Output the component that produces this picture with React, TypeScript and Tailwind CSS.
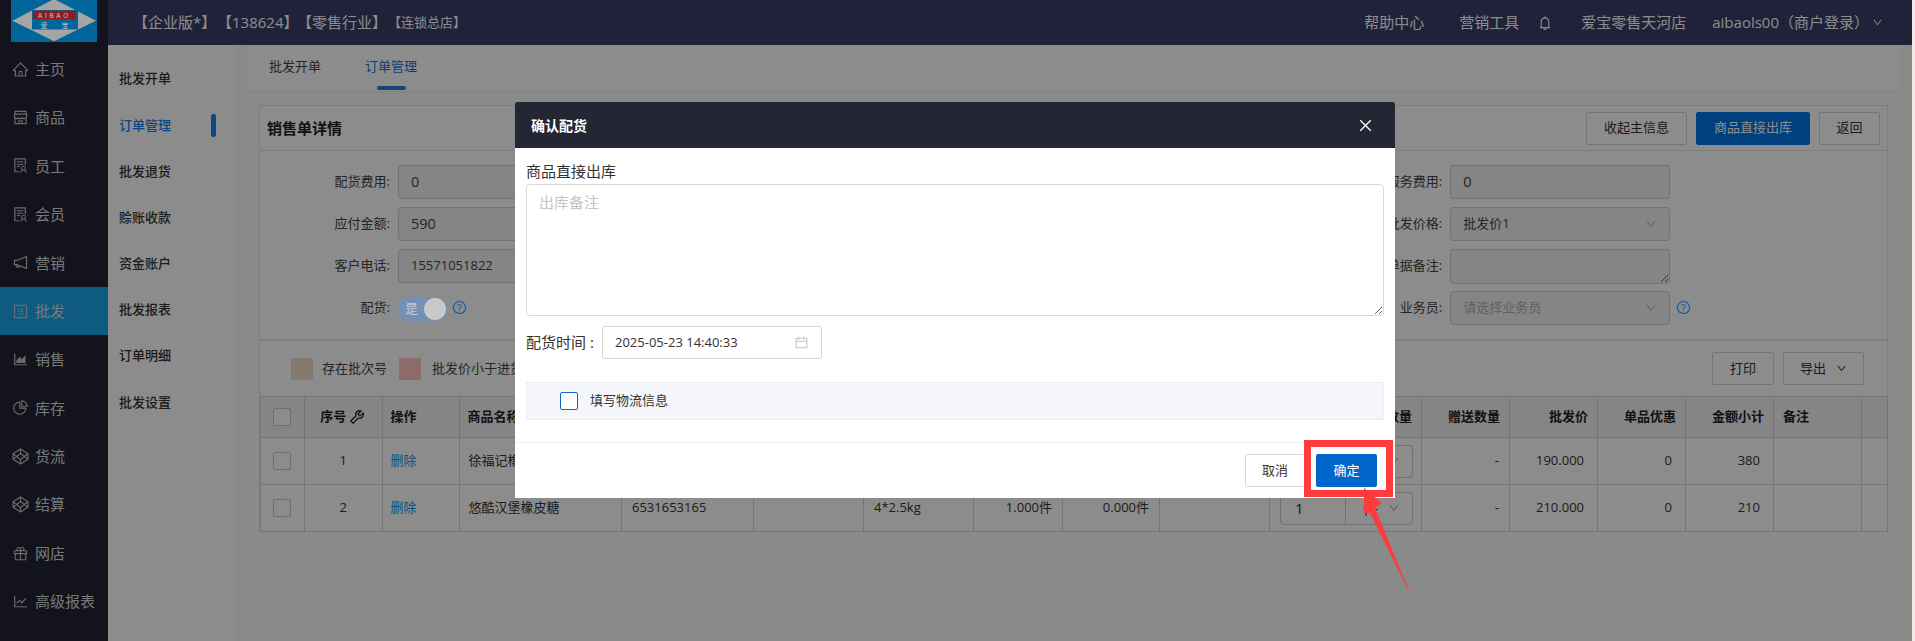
import {
  AiOutlineAreaChart,
  AiOutlineBell,
  AiOutlineCalendar,
  AiOutlineClose,
  AiOutlineDown,
  AiOutlineGift,
  AiOutlineHome,
  AiOutlineLineChart,
  AiOutlineNotification,
  AiOutlinePieChart,
  AiOutlineProfile,
  AiOutlineQuestionCircle,
  AiOutlineShop,
  AiOutlineSolution,
  AiOutlineTool,
} from "react-icons/ai";

const CubeIcon = ({ className = "" }: { className?: string }) => (
  <svg viewBox="0 0 16 16" fill="none" stroke="currentColor" strokeWidth="1.1" className={className}>
    <polygon points="8,1 15,5.5 15,10.5 8,15 1,10.5 1,5.5" strokeLinejoin="round" />
    <polygon points="8,5 11.5,8 8,11 4.5,8" />
    <path d="M8 1v4M8 11v4M1 5.5 4.5 8M15 5.5 11.5 8M1 10.5 4.5 8M15 10.5 11.5 8" />
  </svg>
);

const menu = [
  { label: "主页", icon: AiOutlineHome },
  { label: "商品", icon: AiOutlineShop },
  { label: "员工", icon: AiOutlineSolution },
  { label: "会员", icon: AiOutlineSolution },
  { label: "营销", icon: AiOutlineNotification },
  { label: "批发", icon: AiOutlineProfile, active: true },
  { label: "销售", icon: AiOutlineAreaChart },
  { label: "库存", icon: AiOutlinePieChart },
  { label: "货流", icon: CubeIcon },
  { label: "结算", icon: CubeIcon },
  { label: "网店", icon: AiOutlineGift },
  { label: "高级报表", icon: AiOutlineLineChart },
];

const subMenu = ["批发开单", "订单管理", "批发退货", "赊账收款", "资金账户", "批发报表", "订单明细", "批发设置"];

const Logo = () => (
  <svg viewBox="0 0 86 42" className="relative z-20 ml-[11px] block h-[42px] w-[86px]">
    <rect width="86" height="42" fill="#03669a" />
    <polygon points="1.5,20.7 43,-1 85,20.7 43,41.3" fill="#a5a5a5" />
    <rect x="21" y="10" width="46" height="19.5" fill="#03669a" />
    <rect x="22" y="10.7" width="43" height="8.6" fill="#8e1d20" />
    <text x="43.5" y="17.5" textAnchor="middle" fontSize="6.5" letterSpacing="2.6" fill="#c9c9c9" fontFamily="'Liberation Sans', sans-serif">
      AIBAO
    </text>
    <text x="33" y="27.5" textAnchor="middle" fontSize="7" fill="#a9b9c2" fontFamily="'Noto Sans CJK SC', sans-serif">
      爱
    </text>
    <text x="54" y="27.5" textAnchor="middle" fontSize="7" fill="#a9b9c2" fontFamily="'Noto Sans CJK SC', sans-serif">
      宝
    </text>
  </svg>
);

const Sidebar = () => (
  <aside className="flex w-[108px] shrink-0 flex-col bg-[#212433]">
    <div className="h-[45px]">
      <Logo />
    </div>
    {menu.map((item) => {
      const Icon = item.icon;
      return (
        <div
          key={item.label}
          className={`flex h-[48.4px] items-center pl-[12px] text-[15px] text-[#dcdcdc] ${item.active ? "bg-[#1ca6e8]" : ""}`}
        >
          <Icon className="mr-[6px] size-[17px] text-[#c4c4c4]" />
          {item.label}
        </div>
      );
    })}
  </aside>
);

const TopBar = () => (
  <header className="flex h-[45px] shrink-0 items-center bg-[#3a3e69] pl-[25px] pr-[29px] text-[15px] text-white">
    <span className="w-[84px]">【企业版*】</span>
    <span className="w-[80px]">【138624】</span>
    <span className="w-[91px]">【零售行业】</span>
    <span className="text-[13px]">【连锁总店】</span>
    <span className="ml-auto">帮助中心</span>
    <span className="ml-[35px]">营销工具</span>
    <AiOutlineBell className="ml-[18px] size-[16px]" />
    <span className="ml-[28px]">爱宝零售天河店</span>
    <span className="ml-[26px]">aibaols00（商户登录）</span>
    <AiOutlineDown className="ml-[3px] size-[11px]" />
  </header>
);

const SubNav = () => (
  <nav className="flex w-[128px] shrink-0 flex-col bg-white pt-[11px] text-[13px] font-medium text-[#333333]">
    {subMenu.map((label) => {
      const active = label === "订单管理";
      return (
        <div key={label} className={`flex h-[46.2px] items-center justify-between pl-[11px] pr-[20px] ${active ? "text-[#0e80ee]" : ""}`}>
          {label}
          {active && <span className="h-[23px] w-[5px] rounded-[2px] bg-[#0e84f6]" />}
        </div>
      );
    })}
  </nav>
);

const Tabs = () => (
  <div className="flex h-[45px] shrink-0 bg-white pl-[22px] text-[13px] text-[#444444] shadow-[0_1px_3px_rgba(0,0,0,0.06)]">
    <div className="flex h-full w-[96px] items-center pb-[3px]">批发开单</div>
    <div className="relative flex h-full items-center pb-[3px] text-[#1274dc]">
      订单管理
      <span className="absolute bottom-[1px] left-[12px] h-[4px] w-[29px] rounded-[2px] bg-[#2a7cdc]" />
    </div>
  </div>
);

const Btn = ({ children, className = "" }: { children: React.ReactNode; className?: string }) => (
  <div className={`flex h-[33px] items-center justify-center rounded-[2px] border border-[#d4d4d4] bg-white text-[13px] text-[#333333] ${className}`}>
    {children}
  </div>
);

const Field = ({ label, className = "", children }: { label: string; className?: string; children: React.ReactNode }) => (
  <div className={`flex h-[42px] items-start ${className}`}>
    <span className="flex h-[33px] w-[129px] shrink-0 items-center justify-end pr-[8px] text-[13px] text-[#444444]">{label}:</span>
    {children}
  </div>
);

const inputBox = "flex h-[34px] w-[220px] shrink-0 items-center rounded-[4px] border border-[#cfcfcf] bg-[#f2f2f2] px-[12px] text-[#444444]";

const Question = ({ className = "" }: { className?: string }) => (
  <AiOutlineQuestionCircle className={`relative z-20 size-[15px] shrink-0 text-[#0d5ca8] ${className}`} />
);

const DetailForm = () => (
  <div className="grid h-[188px] w-[1412px] auto-rows-[42px] grid-cols-4 content-start pl-[9px] pt-[14px]">
    <Field label="配货费用" className="col-start-1 row-start-1">
      <div className={`${inputBox} text-[14.5px]`}>0</div>
    </Field>
    <Field label="服务费用" className="col-start-4 row-start-1">
      <div className={`${inputBox} text-[14.5px]`}>0</div>
    </Field>
    <Field label="应付金额" className="col-start-1 row-start-2">
      <div className={`${inputBox} text-[14.5px]`}>590</div>
    </Field>
    <Field label="批发价格" className="col-start-4 row-start-2">
      <div className={`${inputBox} justify-between text-[13px]`}>
        批发价1
        <AiOutlineDown className="size-[12px] text-[#b5b5b5]" />
      </div>
    </Field>
    <Field label="客户电话" className="col-start-1 row-start-3">
      <div className={`${inputBox} text-[13px]`}>15571051822</div>
    </Field>
    <Field label="单据备注" className="col-start-4 row-start-3">
      <textarea readOnly className="h-[35px] w-[220px] shrink-0 rounded-[4px] border border-[#cfcfcf] bg-[#f2f2f2]" />
    </Field>
    <Field label="配货" className="col-start-1 row-start-4">
      <div className="mt-[6px] flex items-start">
        <div className="relative z-20 flex h-[24px] w-[49px] items-center justify-between rounded-full bg-[#7291b5] pl-[7px] pr-[1px] text-[13px] text-[#c2cddc]">
          是
          <span className="size-[22px] rounded-full bg-[#c9c9c9]" />
        </div>
        <Question className="ml-[5px] mt-[3px]" />
      </div>
    </Field>
    <Field label="业务员" className="col-start-4 row-start-4">
      <div className="flex items-center">
        <div className={`${inputBox} justify-between text-[13px] text-[#b0b0b0]`}>
          请选择业务员
          <AiOutlineDown className="size-[12px] text-[#b5b5b5]" />
        </div>
        <Question className="ml-[6px] -mt-[2px]" />
      </div>
    </Field>
  </div>
);

const colWidths = [
  "w-[44px]", "w-[77.5px]", "w-[77px]", "w-[162.5px]", "w-[132px]", "w-[110px]", "w-[110px]", "w-[89px]", "w-[97px]",
  "w-[110px]", "w-[152px]", "w-[88px]", "w-[88px]", "w-[88px]", "w-[88px]", "w-[88px]", "w-[26px]",
];

const th = "border border-[#d6d6d6] px-[9px] font-semibold";
const td = "border border-[#d6d6d6] px-[10px] font-normal";

const Box = () => <div className="ml-[3px] size-[18px] rounded-[2px] border border-[#c8c8c8] bg-white" />;

const QtyCell = () => (
  <td className={`${td} !px-[10px]`}>
    <div className="flex h-[33px] w-[133px] text-[15px]">
      <div className="flex w-[66px] items-center rounded-l-[4px] border border-[#cfcfcf] pl-[14px]">1</div>
      <div className="flex w-[67px] items-center justify-between rounded-r-[4px] border border-l-0 border-[#cfcfcf] pl-[17px] pr-[12px]">
        件
        <AiOutlineDown className="size-[12px] text-[#a8a8a8]" />
      </div>
    </div>
  </td>
);

const rows = [
  { name: "徐福记橡皮糖", code: "6931653165", spec: "4*2.5kg", qty: "2.000件", price: "190.000", total: "380" },
  { name: "悠酷汉堡橡皮糖", code: "6531653165", spec: "4*2.5kg", qty: "1.000件", price: "210.000", total: "210" },
];

const GoodsTable = () => (
  <table className="w-[1627px] table-fixed border-collapse text-[13px] text-[#333333]">
    <colgroup>
      {colWidths.map((w, i) => (
        <col key={i} className={w} />
      ))}
    </colgroup>
    <thead className="bg-[#f2f2f4] text-[#222222]">
      <tr className="h-[41px]">
        <th className={th}>
          <Box />
        </th>
        <th className={`${th} text-center`}>
          <span className="inline-flex items-center gap-[2px]">
            序号
            <AiOutlineTool className="size-[18px] font-normal" />
          </span>
        </th>
        <th className={`${th} !pl-[8px] text-left`}>操作</th>
        <th className={`${th} !pl-[8px] text-left`}>商品名称</th>
        <th className={`${th} text-left`}>商品条码</th>
        <th className={th} />
        <th className={`${th} text-left`}>规格</th>
        <th className={`${th} text-right`}>库存</th>
        <th className={`${th} text-right`}>可用</th>
        <th className={th} />
        <th className={`${th} text-right`}>批发数量</th>
        <th className={`${th} text-right`}>赠送数量</th>
        <th className={`${th} text-right`}>批发价</th>
        <th className={`${th} text-right`}>单品优惠</th>
        <th className={`${th} text-right`}>金额小计</th>
        <th className={`${th} text-left`}>备注</th>
        <th className={th} />
      </tr>
    </thead>
    <tbody>
      {rows.map((row, i) => (
        <tr key={row.code} className="h-[47px]">
          <td className={`${td} !px-[9px]`}>
            <Box />
          </td>
          <td className={`${td} text-center`}>{i + 1}</td>
          <td className={`${td} !pl-[8px] text-[#1395ea]`}>删除</td>
          <td className={`${td} !pl-[9px] truncate`}>{row.name}</td>
          <td className={td}>{row.code}</td>
          <td className={td} />
          <td className={td}>{row.spec}</td>
          <td className={`${td} text-right`}>{row.qty}</td>
          <td className={`${td} text-right`}>0.000件</td>
          <td className={td} />
          <QtyCell />
          <td className={`${td} text-right`}>-</td>
          <td className={`${td} !pr-[13px] text-right`}>{row.price}</td>
          <td className={`${td} !pr-[13px] text-right`}>0</td>
          <td className={`${td} !pr-[13px] text-right`}>{row.total}</td>
          <td className={td} />
          <td className={td} />
        </tr>
      ))}
    </tbody>
  </table>
);

const DetailCard = () => (
  <section className="ml-[12px] mr-[12px] mt-[14px] flex flex-col border-x border-t border-[#e6e6e6] bg-white">
    <div className="flex h-[45px] items-center justify-between border-b border-[#e6e6e6] pl-[7px] pr-[7px]">
      <h2 className="text-[15px] font-semibold text-[#222222]">销售单详情</h2>
      <div className="flex gap-[9px]">
        <Btn className="w-[101px]">收起主信息</Btn>
        <Btn className="w-[114px] !border-[#0076e6] !bg-[#0076e6] !text-white">商品直接出库</Btn>
        <Btn className="w-[61px]">返回</Btn>
      </div>
    </div>
    <DetailForm />
    <div className="flex h-[57px] items-center border-t-2 border-[#e9e9e9] pl-[31px] pr-[23px] text-[13px] text-[#444444]">
      <span className="size-[22px] bg-[#f3dfc8]" />
      <span className="ml-[9px]">存在批次号</span>
      <span className="ml-[12px] size-[22px] bg-[#ffc4c4]" />
      <span className="ml-[11px]">批发价小于进货价</span>
      <Btn className="ml-auto w-[62px]">打印</Btn>
      <Btn className="ml-[9px] w-[81px] gap-[10px]">
        导出
        <AiOutlineDown className="size-[11px]" />
      </Btn>
    </div>
    <GoodsTable />
  </section>
);

const ConfirmModal = () => (
  <div className="absolute left-[515px] top-[102px] z-20 flex h-[396px] w-[880px] flex-col overflow-hidden rounded-t-[2px] bg-white">
    <div className="flex h-[46px] shrink-0 items-center justify-between bg-[#232633] pl-[16px] pr-[21px] text-white">
      <span className="text-[14px] font-semibold">确认配货</span>
      <AiOutlineClose className="size-[17px]" />
    </div>
    <div className="flex flex-1 flex-col px-[11px] text-[#333333]">
      <div className="flex h-[35px] shrink-0 items-end pb-[1px] text-[15px] leading-[22px]">商品直接出库</div>
      <textarea
        readOnly
        placeholder="出库备注"
        className="mt-[1px] h-[132px] w-[858px] shrink-0 rounded-[4px] border border-[#d9d9d9] px-[12px] py-[6px] text-[15px] placeholder:text-[#c4c4c4]"
      />
      <div className="mt-[10px] flex h-[33px] shrink-0 items-center text-[15px]">
        <span className="w-[76px]">配货时间 :</span>
        <div className="flex h-[33px] w-[220px] items-center justify-between rounded-[2px] border border-[#d9d9d9] pl-[12px] pr-[12px] text-[13px]">
          2025-05-23 14:40:33
          <AiOutlineCalendar className="size-[15px] text-[#c4c4c4]" />
        </div>
      </div>
      <div className="mt-[23px] flex h-[38px] w-[858px] shrink-0 items-center border border-[#eceef3] bg-[#f5f6fb] pl-[33px] text-[13px]">
        <span className="size-[18px] rounded-[2px] border border-[#0a66cc] bg-white" />
        <span className="ml-[12px]">填写物流信息</span>
      </div>
    </div>
    <div className="flex h-[56px] shrink-0 justify-end gap-[11px] border-t border-[#eeeeee] pr-[18px] pt-[11px] text-[13px]">
      <div className="flex h-[33px] w-[60px] items-center justify-center rounded-[2px] border border-[#d9d9d9] text-[#333333]">取消</div>
      <div className="flex h-[33px] w-[61px] items-center justify-center rounded-[2px] bg-[#0066cc] text-white">确定</div>
    </div>
    <div className="absolute left-[789px] top-[338px] h-[57px] w-[89px] border-[7px] border-[#ff3b3b]" />
  </div>
);

const Arrow = () => (
  <svg viewBox="0 0 70 120" className="absolute left-[1350px] top-[485px] z-30 h-[120px] w-[70px]">
    <polygon points="14,3 32,18 25,23 62,113 20,28 14,28" fill="#fc3c3c" />
  </svg>
);

export default function App() {
  return (
    <div className="flex h-screen w-[1915px] overflow-hidden bg-[#f7e8e8] font-['Open_Sans','Noto_Sans_CJK_SC',sans-serif]">
      <div className="relative flex w-[1912px] shrink-0">
        <Sidebar />
        <div className="flex min-w-0 flex-1 flex-col">
          <TopBar />
          <div className="flex min-h-0 flex-1">
            <SubNav />
            <main className="min-w-0 flex-1 bg-[#fbfbfc] pl-[11px] pr-[12px] pt-[1px]">
              <Tabs />
              <DetailCard />
            </main>
          </div>
        </div>
        <div className="absolute inset-0 z-10 bg-black/45" />
        <ConfirmModal />
        <Arrow />
      </div>
    </div>
  );
}
